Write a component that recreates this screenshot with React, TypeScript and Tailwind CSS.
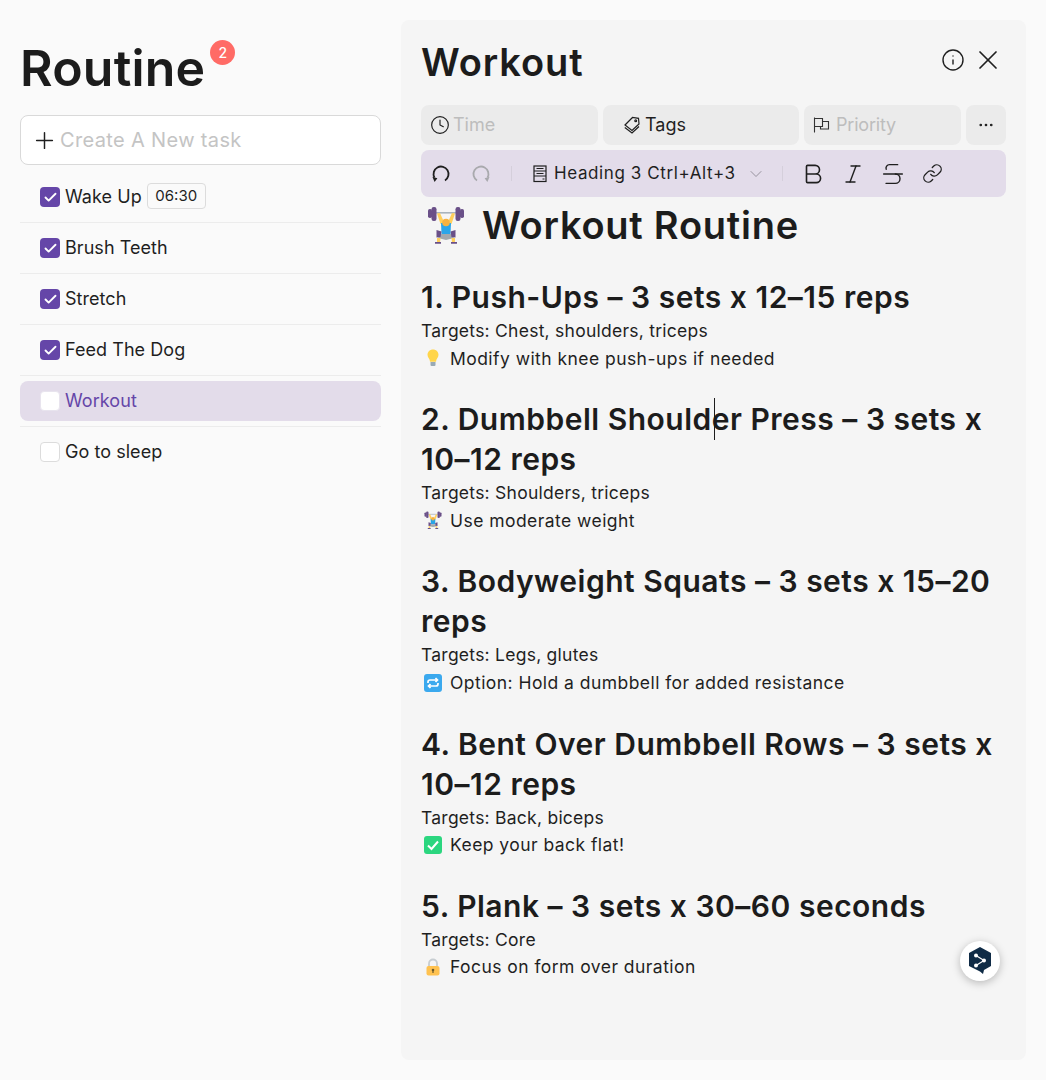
import { Plus, Clock, Info, X, Ellipsis, ChevronDown, Bold, Italic, Strikethrough, Link, Check } from 'lucide-react';

const tasks = [
  { name: 'Wake Up', done: true, time: '06:30' },
  { name: 'Brush Teeth', done: true },
  { name: 'Stretch', done: true },
  { name: 'Feed The Dog', done: true },
  { name: 'Workout', done: false, active: true },
  { name: 'Go to sleep', done: false },
];

function Lifter({ size }: { size: number }) {
  return (
    <svg width={size} height={size} viewBox="0 0 38 38" className="shrink-0">
      <rect x="5" y="6" width="28" height="1.600" fill="#A9B4BC" />
      <rect x="1" y="3" width="4" height="9" rx="1.800" fill="#6A5088" />
      <rect x="4.500" y="1" width="5" height="14" rx="2.200" fill="#6A5088" />
      <rect x="28.500" y="1" width="5" height="14" rx="2.200" fill="#6A5088" />
      <rect x="33" y="3" width="4" height="9" rx="1.800" fill="#6A5088" />
      <path d="M10 7.500l3-.5 4 9-3.500 2zM28 7.500l-3-.5-4 9 3.500 2z" fill="#FFCF5C" />
      <path d="M14 17h10l-.5 11h-9z" fill="#2BA5E8" />
      <circle cx="19" cy="16.500" r="3.800" fill="#F7B23F" />
      <path d="M14 28h10l3 4-8 2-8-2z" fill="#A3A8AC" />
      <path d="M9.500 24l5 1.500-1 5.500-4 .5zM28.500 24l-5 1.500 1 5.500 4 .5z" fill="#6A5088" />
      <path d="M10 32h3.500l-.5 4.500h-3zM28 32h-3.500l.5 4.500h3z" fill="#FFCF5C" />
      <path d="M8 36h6v1.800H8zM24 36h6v1.800h-6z" fill="#6A5088" />
    </svg>
  );
}

function Bulb() {
  return (
    <svg width="18" height="18" viewBox="0 0 36 36" className="shrink-0">
      <path d="M29 11.500c0 6-5 8-5 14H12c0-6-5-8-5-14C7 5.400 12 1 18 1s11 4.400 11 10.500z" fill="#FFD54A" />
      <path d="M13 26h10v6a2 2 0 0 1-2 2h-6a2 2 0 0 1-2-2z" fill="#99AAB5" />
    </svg>
  );
}

function RepeatIcon() {
  return (
    <svg width="18" height="18" viewBox="0 0 18 18" className="shrink-0">
      <rect width="18" height="18" rx="3" fill="#3BA9EE" />
      <path d="M4 9V8a2 2 0 0 1 2-2h7M11.500 4l2 2-2 2M14 9v1a2 2 0 0 1-2 2H5M6.500 10l-2 2 2 2" fill="none" stroke="#fff" strokeWidth="1.700" />
    </svg>
  );
}

function CheckBox() {
  return (
    <svg width="18" height="18" viewBox="0 0 18 18" className="shrink-0">
      <rect width="18" height="18" rx="3" fill="#2BD67F" />
      <path d="M4 9.500l3.500 3.500L14 5.500" fill="none" stroke="#fff" strokeWidth="2" />
    </svg>
  );
}

function Lock() {
  return (
    <svg width="18" height="18" viewBox="0 0 18 18" className="shrink-0">
      <path d="M5 9V5.500a4 4 0 0 1 8 0V9" fill="none" stroke="#C7CDD1" strokeWidth="1.800" />
      <rect x="2.500" y="8" width="13" height="9.500" rx="2" fill="#FFC250" />
      <circle cx="9" cy="12" r="1.300" fill="#6B5A2C" />
      <rect x="8.400" y="12" width="1.200" height="3" fill="#6B5A2C" />
    </svg>
  );
}

function TagsIcon() {
  return (
    <svg width="18" height="18" viewBox="0 0 18 18" fill="none" stroke="#1f1f1f" strokeWidth="1.200" className="shrink-0">
      <path d="M2 9 9.500 1.500l6 .8.500 5.700L9 14.500z" />
      <circle cx="12.700" cy="4.800" r="0.900" />
      <path d="M1.800 11.500 9 17l7-6.500" />
    </svg>
  );
}

function FlagIcon() {
  return (
    <svg width="18" height="18" viewBox="0 0 18 18" fill="none" stroke="#333" strokeWidth="1.100" className="shrink-0">
      <path d="M2.500 1.500v15" />
      <path d="M2.500 2.500h8v8h-8" />
      <path d="M10.500 5.500h6v7.500h-8v-2.500" />
    </svg>
  );
}

function HeadingIcon() {
  return (
    <svg width="14" height="18" viewBox="0 0 14 18" fill="none" stroke="#1f1f1f" strokeWidth="1.200" className="shrink-0">
      <rect x="1" y="1" width="12" height="15.500" />
      <path d="M1 6h12M1 11h12M3.500 3.500h7M3.500 8.500h7M9.500 14h2" />
    </svg>
  );
}

function UndoArc({ flip, color }: { flip?: boolean; color: string }) {
  return (
    <svg width="20" height="20" viewBox="0 0 20 20" fill="none" stroke={color} strokeWidth="1.800" className={flip ? '-scale-x-100 shrink-0' : 'shrink-0'}>
      <path d="M14 16.400A7.500 7.500 0 1 0 3.400 13.500" />
      <path d="M1.400 12.800 6.400 14.200 3.600 18z" fill={color} stroke="none" />
    </svg>
  );
}

function TaskBox({ done, active }: { done: boolean; active?: boolean }) {
  if (done) {
    return (
      <span className="flex h-5 w-5 shrink-0 items-center justify-center rounded-[4px] bg-[#6546a8]">
        <Check size={15} strokeWidth={3} className="text-white" />
      </span>
    );
  }
  return <span className={`h-5 w-5 shrink-0 rounded-[4px] bg-white border ${active ? 'border-[#e8e4ee]' : 'border-[#dcdcdc]'}`} />;
}

const sections = [
  { title: '1. Push-Ups – 3 sets x 12–15 reps', targets: 'Targets: Chest, shoulders, triceps', icon: <Bulb />, tip: 'Modify with knee push-ups if needed' },
  { title: '2. Dumbbell Shoulder Press – 3 sets x 10–12 reps', targets: 'Targets: Shoulders, triceps', icon: <Lifter size={18} />, tip: 'Use moderate weight' },
  { title: '3. Bodyweight Squats – 3 sets x 15–20 reps', targets: 'Targets: Legs, glutes', icon: <RepeatIcon />, tip: 'Option: Hold a dumbbell for added resistance' },
  { title: '4. Bent Over Dumbbell Rows – 3 sets x 10–12 reps', targets: 'Targets: Back, biceps', icon: <CheckBox />, tip: 'Keep your back flat!' },
  { title: '5. Plank – 3 sets x 30–60 seconds', targets: 'Targets: Core', icon: <Lock />, tip: 'Focus on form over duration' },
];

export default function App() {
  return (
    <div className="flex min-h-[1080px] w-[1046px] gap-5 bg-[#fafafa] p-5 font-['Inter','Liberation_Sans',sans-serif] text-[#1f1f1f]">
      {/* Task list */}
      <div className="w-[361px] shrink-0">
        <div className="flex h-[95px] items-start">
          <h1 className="mt-[18px] text-[50px] leading-[60px] font-semibold tracking-[0.2px] text-[#1c1c1c]">Routine</h1>
          <span className="mt-5 ml-[5px] flex h-[25px] w-[25px] items-center justify-center rounded-full bg-[#ff6b66] text-[14px] font-medium text-white">2</span>
        </div>

        <div className="flex h-[50px] items-center rounded-lg border border-[#d9d9d9] bg-white pl-[10px]">
          <Plus size={27} strokeWidth={1.3} className="text-[#1f1f1f]" />
          <span className="ml-[2px] text-[20px] tracking-[0.35px] text-[#c4c4c4]">Create A New task</span>
        </div>

        <div className="mt-3">
          {tasks.map((t, i) => (
            <div key={t.name}>
              {i > 0 && <div className="my-[5px] h-px bg-[#ececec]" />}
              <div className={`flex h-10 items-center rounded-lg pl-5 ${t.active ? 'bg-[#e3dcea] text-[#6546a8]' : ''}`}>
                <TaskBox done={t.done} active={t.active} />
                <span className="mb-[2px] ml-[5px] text-[18px] tracking-[0.05px]">{t.name}</span>
                {t.time && (
                  <span className="mb-[2px] ml-[5px] flex h-[26px] w-[59px] items-center justify-center rounded border border-[#dcdcdc] text-[15px]">{t.time}</span>
                )}
              </div>
            </div>
          ))}
        </div>
      </div>

      {/* Task detail */}
      <div className="relative h-[1040px] w-[625px] shrink-0 rounded-lg bg-[#f5f5f5] p-5">
        <div className="flex h-[45px] items-center justify-between">
          <h2 className="text-[38px] font-semibold tracking-[0.9px] text-[#1c1c1c]">Workout</h2>
          <div className="mr-[2px] mb-[5px] flex items-center gap-[7px]">
            <Info size={24} strokeWidth={1.4} />
            <X size={32} strokeWidth={1.3} />
          </div>
        </div>

        <div className="mt-5 flex h-10 gap-[5px] text-[18px]">
          <div className="flex w-[177px] items-center gap-[3px] rounded-lg bg-[#ebebeb] pl-[9px] text-[#bdbdbd]">
            <Clock size={20} strokeWidth={1.4} className="text-[#1f1f1f]" />
            <span className="mb-[2px]">Time</span>
          </div>
          <div className="flex w-[196px] items-center gap-1 rounded-lg bg-[#ebebeb] pl-5">
            <TagsIcon />
            <span className="mb-[2px]">Tags</span>
          </div>
          <div className="flex w-[157px] items-center gap-[6px] rounded-lg bg-[#ebebeb] pl-2 text-[#bdbdbd]">
            <FlagIcon />
            <span className="mb-[2px] tracking-[-0.2px]">Priority</span>
          </div>
          <div className="flex w-10 items-center justify-center rounded-lg bg-[#ebebeb]">
            <Ellipsis size={18} strokeWidth={1.6} />
          </div>
        </div>

        <div className="mt-[5px] flex h-[47px] items-center rounded-lg bg-[#e3dcea] pl-[10px]">
          <UndoArc color="#1f1f1f" />
          <span className="ml-5"><UndoArc flip color="#a9a9ad" /></span>
          <div className="ml-5 h-[15px] w-px bg-[#d5cfdb]" />
          <div className="ml-[21px]"><HeadingIcon /></div>
          <span className="ml-[7px] text-[17px] tracking-[0.6px]">Heading 3 Ctrl+Alt+3</span>
          <ChevronDown size={20} strokeWidth={1.1} className="ml-[10px] text-[#8f8b96]" />
          <div className="ml-[16px] h-[15px] w-px bg-[#d5cfdb]" />
          <div className="ml-[10px] flex items-center">
            <span className="flex w-10 justify-center"><Bold size={26} strokeWidth={1.5} /></span>
            <span className="flex w-10 justify-center"><Italic size={24} strokeWidth={1.4} /></span>
            <span className="flex w-10 justify-center"><Strikethrough size={28} strokeWidth={1.2} /></span>
            <span className="flex w-10 justify-center"><Link size={21} strokeWidth={1.5} /></span>
          </div>
        </div>

        <div className="mt-[3px] flex h-[50px] items-center pl-[6px]">
          <Lifter size={38} />
          <h1 className="ml-[17px] text-[38px] font-semibold tracking-[0.75px] text-[#1c1c1c]">Workout Routine</h1>
        </div>

        <div className="mt-[27px] flex flex-col gap-[27.2px]">
          {sections.map((s) => (
            <div key={s.title}>
              <h3 className="text-[30px] leading-10 font-semibold tracking-[0.5px] text-[#1c1c1c]">{s.title}</h3>
              <p className="text-[17.5px] leading-[27.500px] tracking-[0.25px]">{s.targets}</p>
              <p className="flex items-center gap-2 pl-[3px] text-[17.5px] leading-[27.500px] tracking-[0.45px]">
                {s.icon}
                {s.tip}
              </p>
            </div>
          ))}
        </div>

        {/* text caret over the second heading */}
        <div className="absolute top-[378px] left-[313px] h-[42px] w-px bg-[#1c1c1c]" />

        {/* DeepL button */}
        <div className="absolute top-[921px] left-[559px] flex h-10 w-10 items-center justify-center rounded-full bg-white shadow-[0_2px_8px_rgba(0,0,0,0.25)]">
          <svg width="26" height="30" viewBox="0 0 26 30">
            <path d="M13 1l11 6v13l-7 4-1 4-3-2.500-11-5.500V7z" fill="#0f2b46" />
            <path d="M9 9.500l8 5-8 5" fill="none" stroke="#fff" strokeWidth="1.200" />
            <circle cx="9" cy="9.500" r="2" fill="#fff" />
            <circle cx="17" cy="14.500" r="2" fill="#fff" />
            <circle cx="9" cy="19.500" r="2" fill="#fff" />
          </svg>
        </div>
      </div>
    </div>
  );
}
